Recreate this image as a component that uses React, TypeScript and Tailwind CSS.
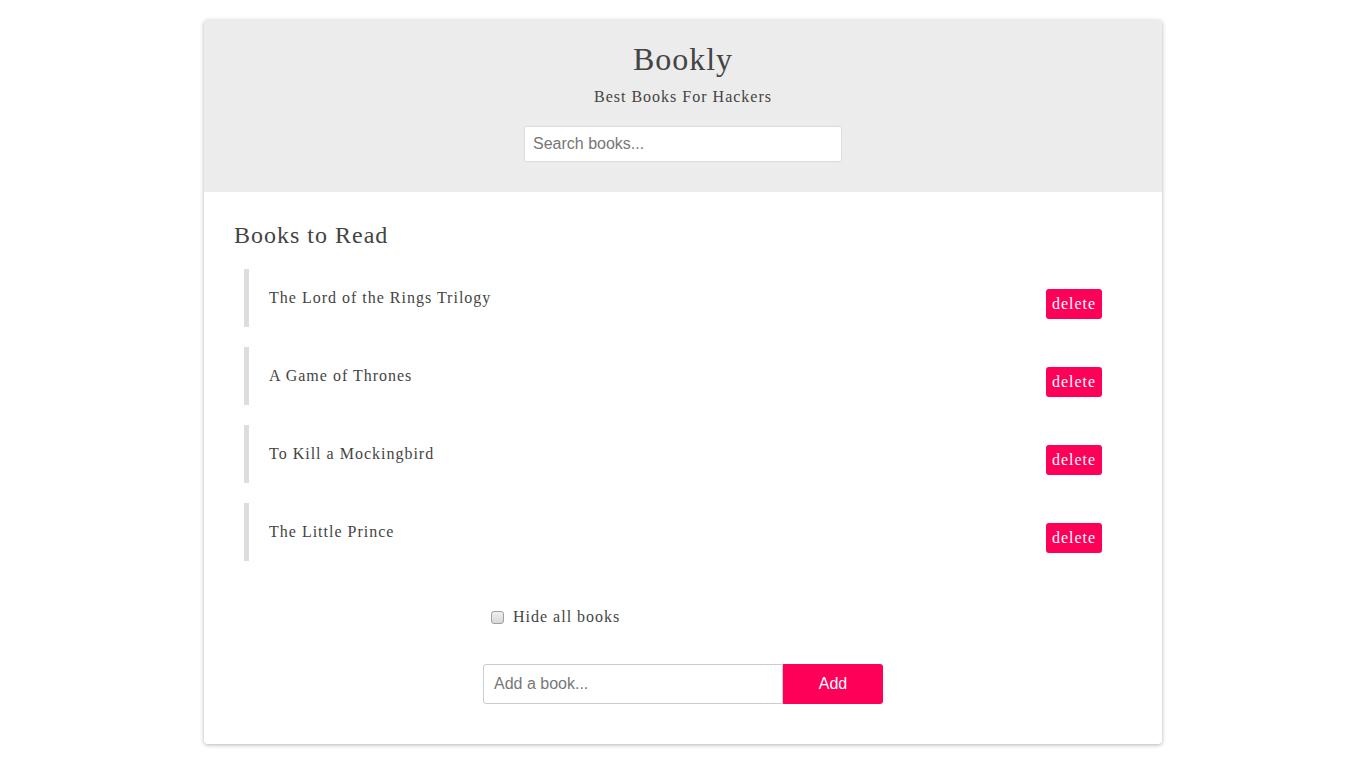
import React from "react";

const books = [
  "The Lord of the Rings Trilogy",
  "A Game of Thrones",
  "To Kill a Mockingbird",
  "The Little Prince",
];

export default function App() {
  const serif = { fontFamily: '"Liberation Serif", "Times New Roman", serif' };
  const sans = { fontFamily: '"Liberation Sans", Arial, sans-serif' };
  return (
    <div className="min-h-screen bg-white pt-[20px]" style={serif}>
      <div className="mx-auto w-[958px] overflow-hidden rounded-[4px] bg-white shadow-[0_1px_4px_rgba(0,0,0,0.3)] text-[#444]">
        <div className="flex flex-col items-center bg-[#ececec] pt-[19px] pb-[30px]">
          <h1 className="text-[32px] leading-[40px] tracking-[1px] text-[#444]">Bookly</h1>
          <p className="mt-[7px] text-[16px] leading-[22px] tracking-[1px] text-[#444]">Best Books For Hackers</p>
          <input
            className="mt-[18px] h-[36px] w-[318px] rounded-[3px] border border-[#ddd] bg-white px-[8px] text-[16px] text-[#555] outline-none placeholder:text-[#777]"
            style={sans}
            placeholder="Search books..."
          />
        </div>
        <div className="px-[30px] pt-[29px] pb-[40px]">
          <h2 className="text-[24px] leading-[28px] tracking-[1px] text-[#444]">Books to Read</h2>
          <ul className="mt-[20px] ml-[10px] mr-[30px] flex flex-col gap-[20px]">
            {books.map((b) => (
              <li key={b} className="flex h-[58px] items-start justify-between border-l-[5px] border-[#ddd] pl-[20px]">
                <span className="pt-[18px] text-[16px] leading-[22px] tracking-[1px] text-[#444]">{b}</span>
                <button className="mt-[20px] h-[30px] w-[56px] rounded-[3px] bg-[#ff0059] text-[16px] leading-[30px] tracking-[1px] text-white">
                  delete
                </button>
              </li>
            ))}
          </ul>
          <div className="mx-auto mt-[44px] flex w-[400px] items-center">
            <label className="ml-[8px] flex items-center gap-[9px] text-[16px] tracking-[1px] text-[#444]">
              <input
                type="checkbox"
                className="h-[13px] w-[13px] appearance-none rounded-[3px] border border-[#a0a0a0] bg-[linear-gradient(#f0f0f0,#d8d8d8)]"
              />
              Hide all books
            </label>
          </div>
          <div className="mt-[35px] flex justify-center">
            <input
              className="h-[40px] w-[300px] rounded-l-[3px] border border-[#ccc] px-[10px] text-[16px] outline-none placeholder:text-[#777]"
              style={sans}
              placeholder="Add a book..."
            />
            <button
              className="h-[40px] w-[100px] rounded-r-[3px] bg-[#ff0059] text-[16px] text-white"
              style={sans}
            >
              Add
            </button>
          </div>
        </div>
      </div>
    </div>
  );
}
